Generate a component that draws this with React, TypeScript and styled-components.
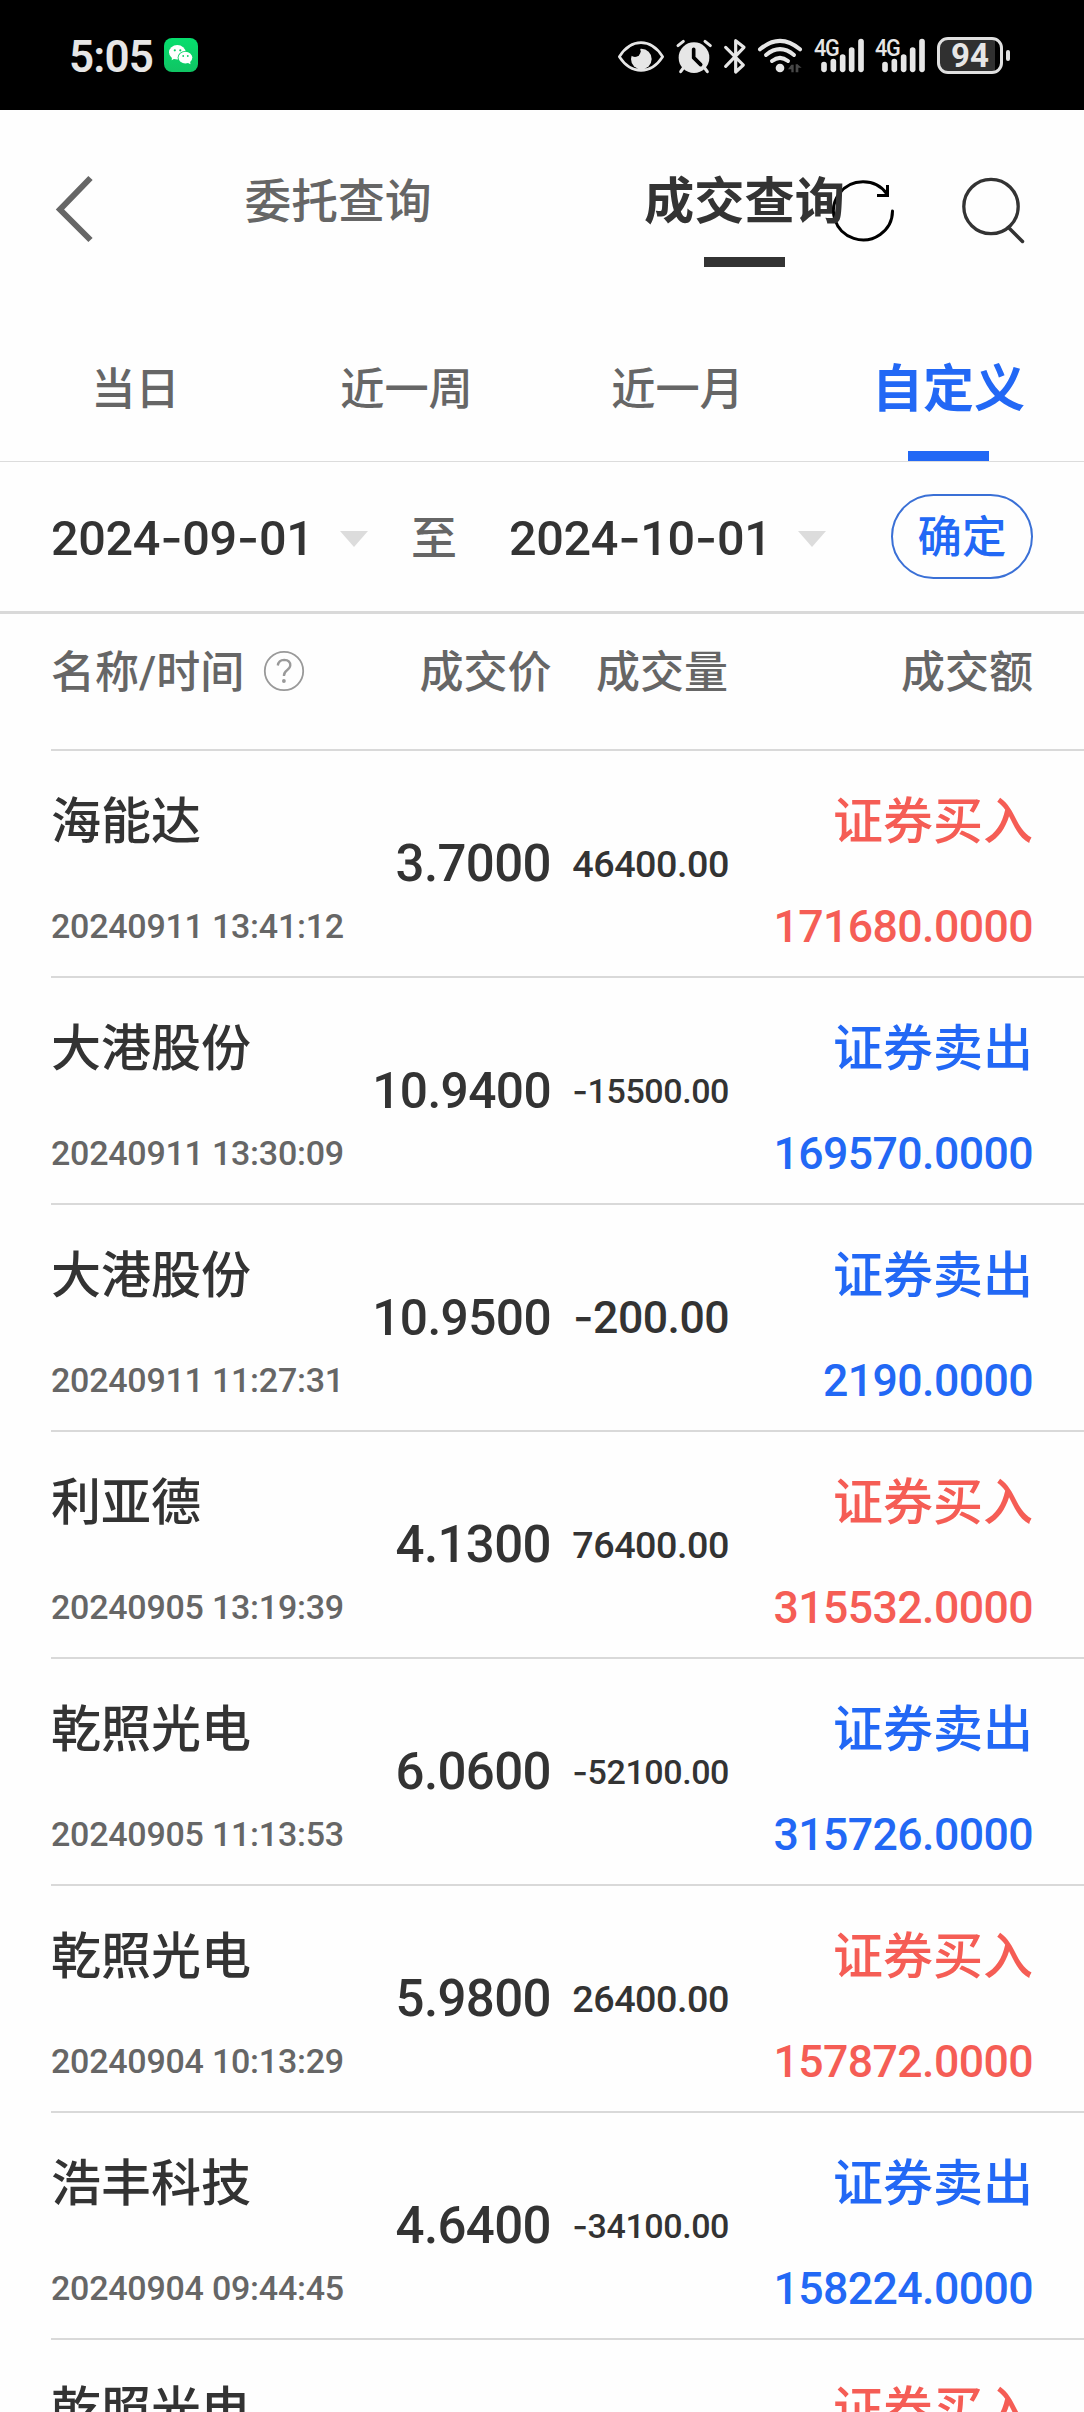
import React from "react";
import styled, { createGlobalStyle } from "styled-components";

const FONT = 'Roboto, "Noto Sans CJK SC", sans-serif';
const BLUE = "#2268f5";
const RED = "#f55d55";

const GlobalStyle = createGlobalStyle`
  * { box-sizing: border-box; }
  body { margin: 0; background: #fefefe; }
`;

const Screen = styled.div`
  width: 1084px;
  height: 2412px;
  overflow: hidden;
  display: flex;
  flex-direction: column;
  background: #fefefe;
  color: #333;
  font-family: ${FONT};
  font-weight: 500;
  white-space: nowrap;
`;

const StatusBar = styled.div`
  height: 110px;
  flex: none;
  padding: 0 74px 0 69px;
  display: flex;
  align-items: center;
  background: #000;
  color: #e6e6e6;
`;
const Clock = styled.span`
  font-size: 44px;
  font-weight: 600;
  letter-spacing: -0.8px;
  line-height: 50px;
  width: 95px;
  padding-top: 4px;
`;
const StatusIcons = styled.div`
  margin-left: auto;
  height: 40px;
  margin-top: 2px;
  display: flex;
`;
const StatusSlice = styled.svg`
  display: block;
  height: 40px;
  flex: none;
`;
const Signal = styled.div`
  position: relative;
  width: 61.7px;
  height: 40px;
`;
const SignalLabel = styled.span`
  position: absolute;
  left: 4px;
  top: 1px;
  font-size: 23px;
  line-height: 23px;
  letter-spacing: -1.4px;
  transform: scaleX(0.94);
  transform-origin: left;
`;
const Battery = styled.div`
  width: 66px;
  height: 37px;
  margin: 1px 0 0 4px;
  border: 3px solid #e0e0e0;
  border-radius: 11px;
  background: linear-gradient(to right, #303030 91%, #000 91%);
  font-size: 33px;
  font-weight: 700;
  line-height: 32px;
  text-align: center;
`;
const BatteryTip = styled.div`
  width: 4px;
  height: 11px;
  margin: 14px 0 0 3px;
  border-radius: 2px;
  background: #e0e0e0;
`;

const NavBar = styled.header`
  height: 216px;
  flex: none;
  display: grid;
  grid-template-columns: 135px 406px 407px 136px;
  position: relative;
`;
const BackIcon = styled.svg`
  width: 42px;
  height: 70px;
  margin: 64px 0 0 54px;
`;
const NavTab = styled.div<{ $active?: boolean }>`
  z-index: 1;
  padding-top: 57px;
  display: flex;
  flex-direction: column;
  align-items: center;
  font-size: ${(p) => (p.$active ? 50.2 : 46.8)}px;
  line-height: 70px;
  font-weight: ${(p) => (p.$active ? 700 : 500)};
  color: ${(p) => (p.$active ? "#333" : "#666")};
`;
const Underline = styled.div<{ $color: string }>`
  width: 81px;
  height: 10px;
  background: ${(p) => p.$color};
`;
const NavUnderline = styled(Underline)`
  margin-top: 20px;
`;
const NavActions = styled.div`
  position: absolute;
  right: 54px;
  top: 62px;
  display: flex;
  gap: 61px;
`;

const RangeTabs = styled.nav`
  height: 136px;
  flex: none;
  display: grid;
  grid-template-columns: repeat(4, 1fr);
  border-bottom: 1px solid #dcdcdc;
`;
const RangeTab = styled.div<{ $active?: boolean }>`
  display: flex;
  flex-direction: column;
  align-items: center;
  justify-content: space-between;
  padding-top: 29px;
  font-size: ${(p) => (p.$active ? 51 : 44.2)}px;
  line-height: 70px;
  font-weight: ${(p) => (p.$active ? 700 : 500)};
  color: ${(p) => (p.$active ? BLUE : "#666")};
`;

const DateBar = styled.div`
  height: 152px;
  flex: none;
  padding: 0 51px;
  display: flex;
  align-items: center;
  border-bottom: 3px solid #d9d9d9;
`;
const DateValue = styled.span`
  width: 289px;
  padding-top: 3px;
  font-size: 48.6px;
  letter-spacing: -0.007em;
  line-height: 60px;
`;
const Dash = styled.span`
  font-family: Inter, sans-serif;
`;
const Caret = styled.div`
  width: 0;
  height: 0;
  border: 14px solid transparent;
  border-top: 16px solid #dcdcdc;
  border-bottom: 0;
  margin-top: 5px;
`;
const To = styled.span`
  width: 141px;
  padding: 3px 0 0 43px;
  font-size: 46px;
  line-height: 60px;
  color: #666;
`;
const Confirm = styled.button`
  width: 142px;
  height: 85px;
  margin-left: auto;
  padding: 2px 0 0;
  border: 2px solid #3a70d6;
  border-radius: 43px;
  background: none;
  font: 500 44.4px/60px ${FONT};
  color: ${BLUE};
`;

const TableHead = styled.div`
  height: 135px;
  flex: none;
  padding: 28px 51px 0 51px;
  display: grid;
  grid-template-columns: 330.5px 170px 176.5px 1fr;
  font-size: 44px;
  line-height: 60px;
  color: #666;
`;
const HeadCell = styled.div<{ $first?: boolean }>`
  display: flex;
  align-items: center;
  justify-content: ${(p) => (p.$first ? "flex-start" : "flex-end")};
  gap: 19px;
  height: 60px;
  padding-top: 2px;
`;
const HelpIcon = styled.svg`
  width: 42px;
  height: 42px;
  margin-top: -4px;
`;

const Row = styled.div`
  height: 227px;
  flex: none;
  margin-left: 51px;
  padding-right: 51px;
  border-top: 2px solid #d9d9d9;
  display: grid;
  grid-template-columns: 305px 195px 178px 1fr;
`;
const Stack = styled.div<{ $side?: "buy" | "sell" }>`
  display: flex;
  flex-direction: column;
  padding-top: 36px;
  align-items: ${(p) => (p.$side ? "flex-end" : "flex-start")};
  color: ${(p) => (p.$side === "buy" ? RED : p.$side === "sell" ? BLUE : "#333")};
`;
const Name = styled.div`
  font-size: 50px;
  line-height: 70px;
`;
const Time = styled.div`
  margin-top: 34px;
  font-size: 34px;
  letter-spacing: -0.007em;
  line-height: 70px;
  color: #666;
`;
const Amount = styled.div`
  margin-top: 35px;
  font-size: 44.6px;
  letter-spacing: -0.013em;
  line-height: 70px;
`;
const Num = styled.div<{ $size: number }>`
  align-self: center;
  text-align: right;
  font-size: ${(p) => p.$size}px;
  letter-spacing: -0.012em;
  line-height: 60px;
`;

type Trade = { name: string; time: string; price: string; volume: string; size: number; side: "buy" | "sell"; amount: string };

const trades: Trade[] = [
  { name: "海能达", time: "20240911 13:41:12", price: "3.7000", volume: "46400.00", size: 37.7, side: "buy", amount: "171680.0000" },
  { name: "大港股份", time: "20240911 13:30:09", price: "10.9400", volume: "-15500.00", size: 34, side: "sell", amount: "169570.0000" },
  { name: "大港股份", time: "20240911 11:27:31", price: "10.9500", volume: "-200.00", size: 44.6, side: "sell", amount: "2190.0000" },
  { name: "利亚德", time: "20240905 13:19:39", price: "4.1300", volume: "76400.00", size: 37.7, side: "buy", amount: "315532.0000" },
  { name: "乾照光电", time: "20240905 11:13:53", price: "6.0600", volume: "-52100.00", size: 34, side: "sell", amount: "315726.0000" },
  { name: "乾照光电", time: "20240904 10:13:29", price: "5.9800", volume: "26400.00", size: 37.7, side: "buy", amount: "157872.0000" },
  { name: "浩丰科技", time: "20240904 09:44:45", price: "4.6400", volume: "-34100.00", size: 34, side: "sell", amount: "158224.0000" },
  { name: "乾照光电", time: "", price: "", volume: "", size: 34, side: "buy", amount: "" },
];

const dashed = (value: string) =>
  value.split(/(-)/).map((part, i) => (part === "-" ? <Dash key={i}>-</Dash> : part));

const WeChat = () => (
  <svg width="34" height="34" viewBox="0 0 34 34">
    <defs>
      <linearGradient id="wx" x1="0" y1="0" x2="0" y2="1">
        <stop offset="0" stopColor="#06de6e" />
        <stop offset="1" stopColor="#10c463" />
      </linearGradient>
    </defs>
    <rect width="34" height="34" rx="8" fill="url(#wx)" />
    <path d="M8 19l-.3 3.2 3-1.6z" fill="#fff" />
    <ellipse cx="13.3" cy="14.3" rx="8.3" ry="7.2" fill="#fff" />
    <ellipse cx="21.3" cy="19.6" rx="7.7" ry="6.6" fill="#0bd169" />
    <ellipse cx="21.4" cy="19.6" rx="6.9" ry="5.9" fill="#fff" />
    <path d="M23 24.5l3.5 1.8-.5-3.5z" fill="#fff" />
    <g fill="#0bd169">
      <circle cx="10.8" cy="12.3" r="1.1" />
      <circle cx="16.3" cy="12.3" r="1.1" />
      <circle cx="19.2" cy="18" r="0.9" />
      <circle cx="23.8" cy="18" r="0.9" />
    </g>
  </svg>
);

const Bars = () => (
  <Signal>
    <StatusSlice width="62" viewBox="627 48 186 120">
      <g stroke="#e6e6e6" strokeWidth="17" strokeLinecap="round">
        <path d="M669 134V148" />
        <path d="M697 125V148" />
        <path d="M725 111V148" />
        <path d="M752 90V148" />
        <path d="M780 65V148" />
      </g>
    </StatusSlice>
    <SignalLabel>4G</SignalLabel>
  </Signal>
);

export default function App() {
  return (
    <>
      <GlobalStyle />
      <Screen>
        <StatusBar>
          <Clock>5:05</Clock>
          <WeChat />
          <StatusIcons>
            <StatusSlice width="58" viewBox="39 48 174 120">
              <path d="M55 110Q82 68 120 68T185 110Q158 151 120 151T55 110Z" fill="none" stroke="#e6e6e6" strokeWidth="8" strokeLinejoin="round" />
              <circle cx="121" cy="117" r="31" fill="#e6e6e6" />
              <circle cx="102" cy="94" r="17" fill="#000" />
            </StatusSlice>
            <StatusSlice width="50" viewBox="213 48 150 120">
              <circle cx="279" cy="113" r="46" fill="#e6e6e6" />
              <path d="M231 77L247 64M328 77L312 64M247 144L239 155M311 144L319 155" stroke="#e6e6e6" strokeWidth="9" strokeLinecap="round" />
              <path d="M278 88V113L299 134" fill="none" stroke="#000" strokeWidth="11" strokeLinecap="round" strokeLinejoin="round" />
            </StatusSlice>
            <StatusSlice width="32" viewBox="363 48 96 120">
              <path d="M374 82L427 135L404 156V62L429 82L374 139" fill="none" stroke="#e6e6e6" strokeWidth="9.5" strokeLinecap="round" strokeLinejoin="round" />
            </StatusSlice>
            <StatusSlice width="56" viewBox="459 48 168 120">
              <g fill="none" stroke="#e6e6e6" strokeWidth="12" strokeLinecap="round">
                <path d="M477 88Q537 37 597 88" />
                <path d="M495 105Q537 70 579 105" />
                <path d="M513 123Q537 104 561 123" />
              </g>
              <circle cx="537" cy="144" r="13" fill="#e6e6e6" />
              <path d="M561 148L571 134H578V157H571V148ZM602 143H592V157H584V133H591V134Z" fill="#484848" />
            </StatusSlice>
            <Bars />
            <Bars />
            <Battery>94</Battery>
            <BatteryTip />
          </StatusIcons>
        </StatusBar>

        <NavBar>
          <BackIcon viewBox="0 0 42 70">
            <path d="M36.5 4L6 35.500L36.500 66" fill="none" stroke="#666" strokeWidth="6" />
          </BackIcon>
          <NavTab>委托查询</NavTab>
          <NavTab $active>
            成交查询
            <NavUnderline $color="#333" />
          </NavTab>
          <NavActions>
            <svg width="70" height="74" viewBox="0 0 70 74">
              <path d="M63.500 39A29.500 29 0 1 1 58 22" fill="none" stroke="#000" strokeWidth="3" strokeLinecap="round" />
              <path d="M58.500 13V23.500H48" fill="none" stroke="#000" strokeWidth="3" />
            </svg>
            <svg width="70" height="74" viewBox="0 0 70 74">
              <circle cx="31" cy="34.500" r="27.200" fill="none" stroke="#333" strokeWidth="3.300" />
              <path d="M48.500 55.500L62.500 69.500" stroke="#333" strokeWidth="3.500" strokeLinecap="round" />
            </svg>
          </NavActions>
        </NavBar>

        <RangeTabs>
          <RangeTab>当日</RangeTab>
          <RangeTab>近一周</RangeTab>
          <RangeTab>近一月</RangeTab>
          <RangeTab $active>
            自定义
            <Underline $color={BLUE} />
          </RangeTab>
        </RangeTabs>

        <DateBar>
          <DateValue>{dashed("2024-09-01")}</DateValue>
          <Caret />
          <To>至</To>
          <DateValue>{dashed("2024-10-01")}</DateValue>
          <Caret />
          <Confirm>确定</Confirm>
        </DateBar>

        <TableHead>
          <HeadCell $first>
            名称/时间
            <HelpIcon viewBox="0 0 42 42" fill="none" stroke="#999">
              <circle cx="21" cy="21" r="19.200" strokeWidth="1.800" />
              <path d="M14.800 15.500Q15.500 9.800 21.200 9.800Q27.300 10 27.300 15.300Q27.200 18 24 20.300Q20.800 22.700 20.900 26" strokeWidth="2.300" />
              <circle cx="20.900" cy="31" r="1.900" fill="#999" stroke="none" />
            </HelpIcon>
          </HeadCell>
          <HeadCell>成交价</HeadCell>
          <HeadCell>成交量</HeadCell>
          <HeadCell>成交额</HeadCell>
        </TableHead>

        {trades.map((t, i) => (
          <Row key={i}>
            <Stack>
              <Name>{t.name}</Name>
              <Time>{t.time}</Time>
            </Stack>
            <Num $size={t.price.length > 6 ? 49.6 : 51}>{t.price}</Num>
            <Num $size={t.size}>{dashed(t.volume)}</Num>
            <Stack $side={t.side}>
              <Name>{t.side === "buy" ? "证券买入" : "证券卖出"}</Name>
              <Amount>{t.amount}</Amount>
            </Stack>
          </Row>
        ))}
      </Screen>
    </>
  );
}
